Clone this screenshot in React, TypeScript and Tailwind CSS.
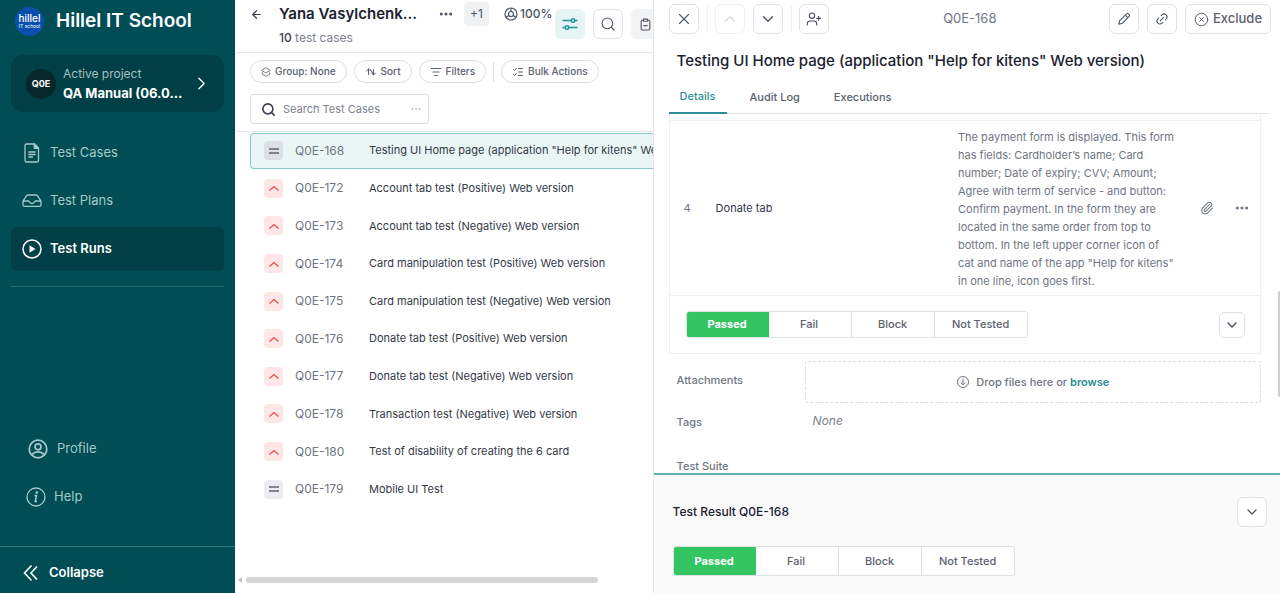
import type { ReactNode } from "react";
import {
  ArrowLeft,
  ChevronDown,
  ChevronUp,
  ChevronRight,
  CircleX,
  ClipboardMinus,
  Ellipsis,
  Layers2,
  Link2,
  ListChecks,
  ListFilter,
  Paperclip,
  Search,
  UserPlus,
  X,
} from "lucide-react";

type Priority = "normal" | "high";

const cases: { id: string; title: string; priority: Priority }[] = [
  { id: "Q0E-168", title: 'Testing UI Home page (application "Help for kitens" Web version)', priority: "normal" },
  { id: "Q0E-172", title: "Account tab test (Positive) Web version", priority: "high" },
  { id: "Q0E-173", title: "Account tab test (Negative) Web version", priority: "high" },
  { id: "Q0E-174", title: "Card manipulation test (Positive) Web version", priority: "high" },
  { id: "Q0E-175", title: "Card manipulation test (Negative) Web version", priority: "high" },
  { id: "Q0E-176", title: "Donate tab test (Positive) Web version", priority: "high" },
  { id: "Q0E-177", title: "Donate tab test (Negative) Web version", priority: "high" },
  { id: "Q0E-178", title: "Transaction test (Negative) Web version", priority: "high" },
  { id: "Q0E-180", title: "Test of disability of creating the 6 card", priority: "high" },
  { id: "Q0E-179", title: "Mobile UI Test", priority: "normal" },
];

function DocumentIcon() {
  return (
    <svg viewBox="0 0 20 20" className="size-5" fill="none" stroke="currentColor" strokeWidth="1.3" strokeLinejoin="round" strokeLinecap="round">
      <path d="M4.5 1h8l4 4v12.500a1.500 1.500 0 0 1-1.500 1.500h-10.500a1.500 1.500 0 0 1-1.500-1.500v-15a1.500 1.500 0 0 1 1.500-1.500z" />
      <path d="M12.300 1v4.300h4.200z" fill="currentColor" />
      <path d="M6.800 9h6.400M6.800 11.500h6.400M6.800 14h3.600" />
    </svg>
  );
}

function TrayIcon() {
  return (
    <svg viewBox="0 0 20 20" className="size-5" fill="none" stroke="currentColor" strokeWidth="1.3" strokeLinejoin="round">
      <path d="M1 10 4.600 4.700a1.500 1.500 0 0 1 1.200-.7h8.400a1.500 1.500 0 0 1 1.200.7L19 10v3.700a1.600 1.600 0 0 1-1.600 1.600H2.600A1.600 1.600 0 0 1 1 13.700z" />
      <path d="M1 10h5.200c.5 0 .9.300 1.100.8.400 1 1.300 1.700 2.700 1.700s2.300-.7 2.700-1.700c.2-.5.600-.8 1.100-.8H19" />
    </svg>
  );
}

function PlayIcon() {
  return (
    <svg viewBox="0 0 20 20" className="size-5" fill="none">
      <circle cx="10" cy="10" r="9" stroke="currentColor" strokeWidth="1.5" />
      <path d="M7.500 6.200v7.600l6-3.800z" fill="currentColor" />
    </svg>
  );
}

function ProfileIcon() {
  return (
    <svg viewBox="0 0 20 20" className="size-5" fill="none" stroke="currentColor" strokeWidth="1.700">
      <circle cx="10" cy="10" r="8.800" />
      <circle cx="10" cy="7.800" r="3" />
      <path d="M4 15.600c1.600-2 3.500-2.800 6-2.800s4.400.8 6 2.800" />
    </svg>
  );
}

function InfoIcon() {
  return (
    <svg viewBox="0 0 20 20" className="size-5" fill="none" stroke="currentColor" strokeWidth="1.300">
      <circle cx="10" cy="10" r="9" />
      <circle cx="10.800" cy="5.500" r="0.700" fill="currentColor" />
      <path d="M8.500 8.500h1.900L9.300 14.500h1.700" strokeWidth="1.600" />
    </svg>
  );
}

function CollapseIcon() {
  return (
    <svg viewBox="0 0 16 18" className="h-[18px] w-4" fill="none" stroke="currentColor" strokeWidth="1.600">
      <path d="M8.500 1.500 1.500 9l7 7.500M14 2.500 8 9l6 6.500" />
    </svg>
  );
}

function SlidersIcon() {
  return (
    <svg viewBox="0 0 16 14" className="h-3.5 w-4" fill="none" stroke="currentColor" strokeWidth="1.400" strokeLinecap="round">
      <path d="M1 3.500h8M13 3.500h2M1 10.500h2M7 10.500h8" />
      <circle cx="11" cy="3.500" r="1.800" />
      <circle cx="5" cy="10.500" r="1.800" />
    </svg>
  );
}

function ProgressIcon() {
  return (
    <svg viewBox="0 0 14 14" className="size-3.5" fill="none" stroke="currentColor" strokeWidth="1.200">
      <circle cx="7" cy="7" r="6" />
      <circle cx="7" cy="7" r="2.500" />
      <path d="M7 1v3.500M4.900 8.400l-3 1.800M9.100 8.400l3 1.800" />
    </svg>
  );
}

function SortIcon() {
  return (
    <svg viewBox="0 0 12 10" className="h-2.5 w-3" fill="none" stroke="currentColor" strokeWidth="1" strokeLinecap="round" strokeLinejoin="round">
      <path d="M1.500 4l2-2 2 2M3.500 2v5.500M5.500 2.500l3 5M6.500 6 8.500 8 10.500 6M8.500 8V2.500" />
    </svg>
  );
}

function PencilIcon() {
  return (
    <svg viewBox="0 0 14 14" className="size-3.5" fill="none" stroke="currentColor" strokeWidth="1.100" strokeLinejoin="round">
      <path d="M1.800 12.200 2.700 8.700 9.600 1.900a1.300 1.300 0 0 1 1.800 0l.7.7a1.300 1.300 0 0 1 0 1.800L5.300 11.300z" />
      <path d="M8.300 3.200l2.500 2.500" />
    </svg>
  );
}

function DropIcon() {
  return (
    <svg viewBox="0 0 14 14" className="size-3.5" fill="none" stroke="currentColor" strokeWidth="1">
      <circle cx="7" cy="7" r="5.500" />
      <path d="M7 3.800v6M4.700 7.600 7 9.900l2.300-2.300" />
    </svg>
  );
}

function PriorityBadge({ priority, active }: { priority: Priority; active?: boolean }) {
  if (priority === "high") {
    return (
      <span className="flex size-[19px] shrink-0 items-center justify-center rounded bg-[#fee6e6] text-[#ee4b4b]">
        <svg viewBox="0 0 12 12" className="size-3" fill="none" stroke="currentColor" strokeWidth="1.300">
          <path d="M1.500 8.500 6 4.500l4.500 4" />
        </svg>
      </span>
    );
  }
  return (
    <span className={`flex size-[19px] shrink-0 items-center justify-center rounded text-[#5f6473] ${active ? "bg-[#dce0e5]" : "bg-[#ececf0]"}`}>
      <svg viewBox="0 0 12 12" className="size-3" fill="none" stroke="currentColor" strokeWidth="1.300">
        <path d="M1 4h10M1 8h10" />
      </svg>
    </span>
  );
}

function IconButton({ label, children, faded }: { label: string; children: ReactNode; faded?: boolean }) {
  return (
    <button
      type="button"
      aria-label={label}
      disabled={faded}
      className={`flex size-[30px] shrink-0 items-center justify-center rounded-md border bg-white ${faded ? "border-[#f0f1f3] text-[#d3d6da]" : "border-[#dfe2e6] text-[#4b5563]"}`}
    >
      {children}
    </button>
  );
}

function Pill({ icon, children }: { icon: ReactNode; children: ReactNode }) {
  return (
    <button type="button" className="flex h-[23px] items-center gap-1 rounded-full border border-[#d9dce0] px-2.5 text-[10px] font-medium whitespace-nowrap text-[#5b616e]">
      {icon}
      {children}
    </button>
  );
}

function ResultButtons({ large }: { large?: boolean }) {
  return (
    <div role="group" aria-label="Result" className={`flex overflow-hidden rounded-[3px] border border-[#dcdfe3] bg-white text-[11px] font-medium text-[#5b616e] ${large ? "h-[30px]" : "h-[27px]"}`}>
      <button type="button" className="-m-px w-[83px] bg-[#34c563] font-bold text-white">Passed</button>
      <button type="button" className="w-[83px]">Fail</button>
      <button type="button" className="w-[83px] border-l border-[#dcdfe3]">Block</button>
      <button type="button" className="w-[93px] border-l border-[#dcdfe3]">Not Tested</button>
    </div>
  );
}

function NavLink({ icon, label, active }: { icon: ReactNode; label: string; active?: boolean }) {
  return (
    <a
      href="#"
      className={`flex h-11 items-center gap-2 rounded-md px-[11px] text-[13px] ${active ? "bg-[#003f45] font-semibold text-white" : "text-[#a5c9ca]"}`}
    >
      {icon}
      {label}
    </a>
  );
}

function Sidebar() {
  return (
    <nav aria-label="Main" className="flex w-[235px] shrink-0 flex-col bg-[#004d55]">
      <div className="flex h-[42px] items-center gap-3 pl-[15px]">
        <span className="flex size-[29px] flex-col items-center justify-center rounded-full bg-[#0b4fae] text-white">
          <span className="text-[10px] leading-[9px] font-medium">hillel</span>
          <span className="text-[5px] leading-[6px]">IT school</span>
        </span>
        <h1 className="text-[19px] font-semibold text-white">Hillel IT School</h1>
      </div>
      <button type="button" className="mx-[11px] mt-[13px] flex h-[57px] items-center rounded-xl bg-[#003f45] pl-[15px] text-left">
        <span className="flex size-[30px] shrink-0 items-center justify-center rounded-full bg-[#06282d] text-[9px] font-bold text-white">Q0E</span>
        <span className="ml-[7px] flex min-w-0 flex-col">
          <span className="text-xs leading-[18px] text-[#a5c0c3]">Active project</span>
          <span className="text-[13px] leading-5 font-bold whitespace-nowrap text-white">QA Manual (06.0...</span>
        </span>
        <ChevronRight className="mr-3 ml-auto size-[21px] text-white" strokeWidth={1.5} />
      </button>
      <div className="mx-[11px] mt-[19px] flex flex-col gap-1 border-b border-[#226a70] pb-[15px]">
        <NavLink icon={<DocumentIcon />} label="Test Cases" />
        <NavLink icon={<TrayIcon />} label="Test Plans" />
        <NavLink icon={<PlayIcon />} label="Test Runs" active />
      </div>
      <div className="mt-auto flex flex-col pb-[25px] text-[13px] text-[#a5c9ca]">
        <a href="#" className="flex h-12 items-center gap-[9px] pl-7">
          <ProfileIcon />
          Profile
        </a>
        <a href="#" className="flex h-12 items-center gap-2 pl-[26px]">
          <InfoIcon />
          Help
        </a>
      </div>
      <button type="button" className="flex h-[47px] items-center gap-2.5 border-t border-[#2e7a7f] pt-1.5 pl-[23px] text-[13px] font-semibold text-white">
        <CollapseIcon />
        Collapse
      </button>
    </nav>
  );
}

function CaseList() {
  return (
    <main className="flex min-w-0 flex-2 flex-col overflow-hidden bg-white">
      <header className="flex h-[53px] shrink-0 border-b border-[#e3e5e8]">
        <button type="button" aria-label="Back" className="ml-[15px] flex h-7 w-[13px] items-center text-[#3b4150]">
          <ArrowLeft className="size-[13px]" strokeWidth={2.2} />
        </button>
        <div className="ml-4 w-[159px] shrink-0">
          <h2 className="h-7 text-[15px] leading-7 font-semibold whitespace-nowrap text-[#1b2130]">Yana Vasylchenk...</h2>
          <p className="text-xs leading-5 text-[#7c828f]">
            <span className="font-medium text-[#3b4150]">10</span> test cases
          </p>
        </div>
        <div className="flex h-7 shrink-0 items-center text-[#4b5563]">
          <button type="button" aria-label="More">
            <Ellipsis className="size-4" strokeWidth={2.600} />
          </button>
          <span className="ml-2.5 flex h-6 w-[25px] items-center justify-center rounded bg-[#f0f1f3] text-xs">+1</span>
          <span className="ml-[15px] flex items-center gap-0.5 text-xs font-medium">
            <ProgressIcon />
            100%
          </span>
        </div>
        <div className="ml-[3px] flex shrink-0 gap-2 pt-[9px]">
          <button type="button" aria-label="Display options" className="flex size-[30px] items-center justify-center rounded-md bg-[#e6f4f4] text-[#21949a]">
            <SlidersIcon />
          </button>
          <IconButton label="Search">
            <Search className="size-4" strokeWidth={1.600} />
          </IconButton>
          <button type="button" aria-label="Test report" className="flex h-[30px] w-12 shrink-0 items-center rounded-md bg-[#f2f3f5] pl-2 text-[#4b5563]">
            <ClipboardMinus className="size-[13px]" />
          </button>
        </div>
      </header>
      <div className="shrink-0 border-b border-[#e3e5e8] py-[7px] pl-[15px]">
        <div className="flex items-center gap-[7px]">
          <Pill icon={<Layers2 className="size-2.5" />}>Group: None</Pill>
          <Pill icon={<SortIcon />}>Sort</Pill>
          <Pill icon={<ListFilter className="size-3" />}>Filters</Pill>
          <span className="h-5 w-px bg-[#d9dce0]" />
          <Pill icon={<ListChecks className="size-3" />}>Bulk Actions</Pill>
        </div>
        <label className="mt-[11px] flex h-[30px] w-[179px] items-center rounded-[3px] border border-[#d9dce0] pr-1.5 pl-2.5">
          <Search className="size-[15px] shrink-0 text-[#3b4150]" strokeWidth={2.600} />
          <input type="text" aria-label="Search test cases" placeholder="Search Test Cases" className="ml-[7px] w-0 flex-1 text-[11px] outline-none placeholder:text-[#7c828f]" />
          <Ellipsis className="size-3 shrink-0 text-[#b9bdc4]" />
        </label>
      </div>
      <ul className="grid min-h-[376px] shrink-0 auto-rows-fr pl-[15px]">
        {cases.map((item, index) => (
          <li key={item.id} className="flex py-px">
            <a
              href="#"
              aria-current={index === 0 ? "true" : undefined}
              className={`flex flex-1 items-center rounded-l border border-r-0 pl-[13px] text-xs whitespace-nowrap ${index === 0 ? "border-[#84cbc9] bg-[#eaf5f6]" : "border-transparent"}`}
            >
              <PriorityBadge priority={item.priority} active={index === 0} />
              <span className="ml-3 w-[74px] shrink-0 text-[#6f7582]">{item.id}</span>
              <span className="w-0 flex-1 text-[11px] text-[#333947]">{item.title}</span>
            </a>
          </li>
        ))}
      </ul>
      <div aria-hidden="true" className="mt-auto flex h-[27px] items-center gap-1 pl-[3px]">
        <svg viewBox="0 0 4 6" className="h-1.5 w-1 text-[#c4c6c9]">
          <path d="M4 0v6L0 3z" fill="currentColor" />
        </svg>
        <span className="h-1.5 w-[85%] rounded-full bg-[#d5d5d5]" />
      </div>
    </main>
  );
}

function DetailPanel() {
  return (
    <aside aria-label="Test case details" className="flex min-w-0 flex-3 flex-col border-l border-[#e3e5e8] bg-white">
      <header className="flex shrink-0 items-center justify-between pt-1 pr-[9px] pl-[15px]">
        <div className="flex flex-1 items-center gap-2">
          <IconButton label="Close"><X className="size-[18px]" strokeWidth={1.500} /></IconButton>
          <span className="-mr-px h-[26px] w-px bg-[#f0f1f3]" />
          <IconButton label="Previous" faded><ChevronUp className="size-[18px]" strokeWidth={1.500} /></IconButton>
          <IconButton label="Next"><ChevronDown className="size-[18px]" strokeWidth={1.800} /></IconButton>
          <span className="-mr-px h-[26px] w-px bg-[#f0f1f3]" />
          <IconButton label="Assign"><UserPlus className="size-4" strokeWidth={1.700} /></IconButton>
        </div>
        <span className="text-[13px] text-[#6f7582]">Q0E-168</span>
        <div className="flex flex-1 items-center justify-end gap-2">
          <IconButton label="Edit"><PencilIcon /></IconButton>
          <IconButton label="Copy link"><Link2 className="size-3.5 -rotate-45" strokeWidth={1.800} /></IconButton>
          <button type="button" className="flex h-[30px] items-center gap-1 rounded-md border border-[#dfe2e6] px-2 text-[13px] font-medium text-[#5b616e]">
            <CircleX className="size-[15px]" strokeWidth={1.600} />
            Exclude
          </button>
        </div>
      </header>
      <h2 className="mt-4 shrink-0 pl-[23px] text-[15px] leading-[22px] font-medium text-[#1b2130]">
        Testing UI Home page (application "Help for kitens" Web version)
      </h2>
      <div role="tablist" className="mr-2.5 ml-[15px] flex h-[42px] shrink-0 gap-3 border-b border-[#dde3e6] pt-[9px] text-[11px] font-medium text-[#5b616e]">
        <button type="button" role="tab" aria-selected="true" className="-mb-px border-b-2 border-[#2b8e93] px-[11px] text-[#2b8e93]">Details</button>
        <button type="button" role="tab" aria-selected="false" className="px-[11px]">Audit Log</button>
        <button type="button" role="tab" aria-selected="false" className="px-[11px]">Executions</button>
      </div>
      <div className="flex min-h-0 flex-1">
        <div className="min-w-0 flex-1 overflow-hidden pl-[15px] text-[11px] text-[#6f7582]">
          <div className="border-x border-b border-[#eef0f2] pt-1.5">
            <table className="w-full table-fixed border-y border-[#eef0f2] text-left">
              <tbody>
                <tr>
                  <td className="w-[46px] pl-[14px]">4</td>
                  <td className="text-[#333947]">Donate tab</td>
                  <td className="w-[242px] pt-[7px] pr-6 pb-[5px] leading-[18px]">
                    The payment form is displayed. This form has fields: Cardholder’s name; Card number; Date of expiry; CVV; Amount; Agree with term of service - and button: Confirm payment. In the form they are located in the same order from top to bottom. In the left upper corner icon of cat and name of the app "Help for kitens" in one line, icon goes first.
                  </td>
                  <td className="w-[60px]">
                    <div className="flex items-center gap-5">
                      <button type="button" aria-label="Attach file"><Paperclip className="size-[14px]" strokeWidth={1.800} /></button>
                      <button type="button" aria-label="Step options"><Ellipsis className="size-4" strokeWidth={2.600} /></button>
                    </div>
                  </td>
                </tr>
              </tbody>
            </table>
            <div className="flex h-[57px] items-center justify-between pr-[15px] pl-4">
              <ResultButtons />
              <button type="button" aria-label="Expand result" className="flex size-[26px] items-center justify-center rounded-[5px] border border-[#dcdfe3] text-[#3b4150]">
                <ChevronDown className="size-4" strokeWidth={1.800} />
              </button>
            </div>
          </div>
          <dl className="grid grid-cols-[128px_1fr] pl-2 leading-4 font-medium">
            <dt className="pt-[18px]">Attachments</dt>
            <dd className="mt-[7px] flex h-[42px] items-center justify-center gap-1.5 rounded-[3px] border border-dashed border-[#d9dce0]">
              <DropIcon />
              <span>
                Drop files here or <a href="#" className="font-semibold text-[#2b8e93]">browse</a>
              </span>
            </dd>
            <dt className="pt-[11px]">Tags</dt>
            <dd className="pt-2.5 pl-2 text-xs font-normal text-[#7c828f] italic">None</dd>
            <dt className="pt-[30px] leading-3">Test Suite</dt>
            <dd />
          </dl>
        </div>
        <div aria-hidden="true" className="flex w-[19px] shrink-0 justify-end pt-[177px]">
          <span className="h-[106px] w-0.5 rounded-l-sm bg-[#cfcfcf]" />
        </div>
      </div>
      <footer className="shrink-0 border-t-2 border-[#5fb0b3] bg-[#fafafa] pr-[13px] pb-[17px] pl-[19px]">
        <div className="flex items-center justify-between pt-[22px]">
          <h3 className="text-xs font-medium text-[#1b2130]">Test Result Q0E-168</h3>
          <IconButton label="Collapse result"><ChevronDown className="size-4" strokeWidth={1.800} /></IconButton>
        </div>
        <div className="mt-[19px] flex">
          <ResultButtons large />
        </div>
      </footer>
    </aside>
  );
}

export default function App() {
  return (
    <div className="flex h-screen overflow-hidden bg-white font-['Inter','Liberation_Sans',sans-serif]">
      <Sidebar />
      <CaseList />
      <DetailPanel />
    </div>
  );
}
